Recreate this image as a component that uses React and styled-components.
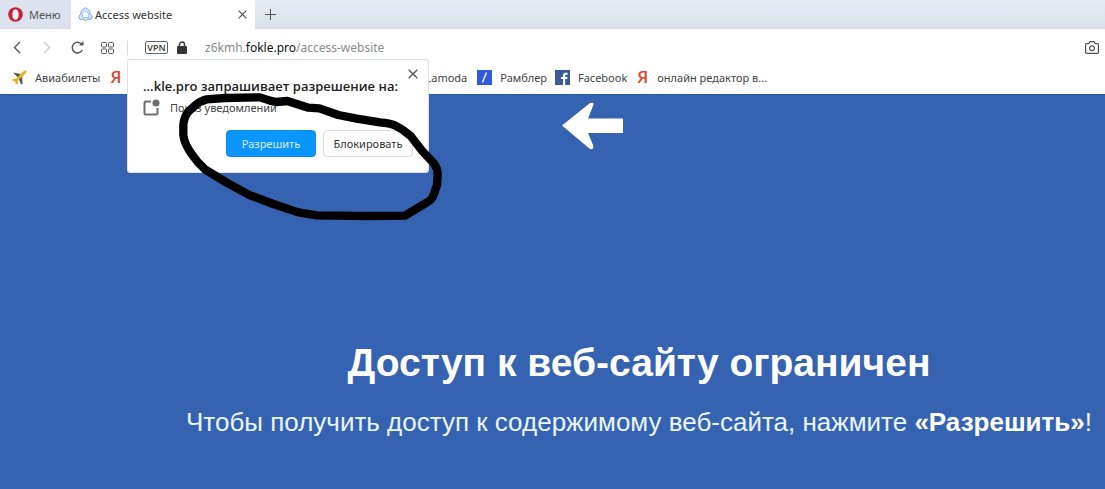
import {useState} from 'react';
import styled, {createGlobalStyle} from 'styled-components';

const GlobalStyle = createGlobalStyle`
  * {
    box-sizing: border-box;
  }

  body {
    margin: 0;
    background-color: #3562b1;
    font-family: 'Noto Sans', 'Open Sans', sans-serif;
    font-size: 11px;
    color: #444;
  }

  button,
  input {
    font: inherit;
    color: inherit;
  }
`;

const Browser = styled.div`
  display: flex;
  flex-direction: column;
  min-height: 100vh;
  overflow-x: hidden;
`;

const TabBar = styled.div`
  display: flex;
  height: 29px;
  background: linear-gradient(#e4ebf3, #dbe1ea);
  border-bottom: 1px solid #d6d9e0;
`;

const IconButton = styled.button`
  display: flex;
  align-items: center;
  justify-content: center;
  width: ${({$width}) => $width || 30}px;
  padding: 0;
  border: 0;
  background: none;
  color: ${({$color}) => $color || '#555'};
`;

const MenuButton = styled.button`
  display: flex;
  align-items: center;
  gap: 6px;
  width: 71px;
  padding: 0 0 0 8px;
  border: 0;
  background-color: #dce3ee;
  color: #555;
`;

const Tab = styled.div`
  display: flex;
  align-items: center;
  gap: 2px;
  width: 184px;
  height: 29px;
  padding-left: 7px;
  background-color: #fff;
  color: #333;
`;

const TabTitle = styled.span`
  flex: 1;
`;

const Toolbar = styled.div`
  display: flex;
  align-items: center;
  height: 37px;
  padding: 0 6px 0 2px;
  background-color: #fff;
`;

const Address = styled.div`
  display: flex;
  align-items: center;
  flex: 1;
  position: relative;
  height: 24px;
  margin-left: 5px;
`;

const Divider = styled.span`
  width: 1px;
  height: 14px;
  margin-right: 17px;
  background-color: #ddd;
`;

const Vpn = styled.span`
  width: 23px;
  border: 1px solid #666;
  border-radius: 2px;
  font-size: 9px;
  font-weight: 600;
  line-height: 11px;
  text-align: center;
  color: #444;
`;

const Lock = styled.svg`
  margin: 0 18px 0 9px;
`;

const Url = styled.a`
  font-size: 12px;
  text-decoration: none;
  color: #8a8a8a;
`;

const Domain = styled.span`
  color: #111;
`;

const Bookmarks = styled.nav`
  display: flex;
  align-items: center;
  height: 28px;
  padding: 0 12px 6px;
  background-color: #fff;
  white-space: nowrap;
`;

const Bookmark = styled.a`
  display: flex;
  align-items: center;
  gap: 8px;
  margin-right: ${({$space}) => $space || 10}px;
  text-decoration: none;
  color: #444;
`;

const Yandex = styled.span`
  width: 12px;
  font-family: 'Open Sans', sans-serif;
  font-size: 17px;
  font-weight: 600;
  line-height: 20px;
  color: #d9442f;
`;

const Popup = styled.section`
  position: absolute;
  top: 23px;
  left: 0;
  z-index: 1;
  width: 302px;
  height: 114px;
  padding: 16px 15px;
  border: 1px solid #dde1e8;
  border-radius: 3px;
  background-color: #fff;
`;

const PopupTitle = styled.h2`
  margin: 0;
  font-family: 'Open Sans', sans-serif;
  font-size: 13px;
  font-weight: 600;
  line-height: 20px;
  white-space: nowrap;
  color: #222;
`;

const CloseButton = styled(IconButton)`
  position: absolute;
  top: 4px;
  right: 5px;
  width: 20px;
  height: 20px;
`;

const Permission = styled.div`
  display: flex;
  align-items: center;
  gap: 10px;
  height: 24px;
  color: #444;
`;

const Actions = styled.div`
  display: flex;
  justify-content: flex-end;
  gap: 7px;
  margin-top: 10px;
`;

const Action = styled.button`
  width: 90px;
  height: 27px;
  padding: 0;
  border: 1px solid ${({$primary}) => ($primary ? '#0a8cf0' : '#ddd')};
  border-radius: 4px;
  background-color: ${({$primary}) => ($primary ? '#0a95ff' : '#fff')};
  color: ${({$primary}) => ($primary ? '#d6f0ff' : '#333')};
`;

const Marker = styled.svg`
  position: absolute;
  top: 30px;
  left: 42px;
  pointer-events: none;
`;

const Main = styled.main`
  flex: 1;
  padding-top: 7px;
  border-top: 1px solid #2b579f;
  background-color: #3562b1;
  font-family: 'Liberation Sans', Arial, sans-serif;
  color: #fff;
`;

const Arrow = styled.svg`
  display: block;
  margin-left: 50%;
`;

const Message = styled.div`
  margin-top: 189px;
  padding-left: 173px;
  text-align: center;
`;

const Heading = styled.h1`
  margin: 0;
  font-size: 39px;
  line-height: 48px;
`;

const Text = styled.p`
  margin: 17px 0 0;
  font-size: 26px;
  line-height: 36px;
  color: #e9f6ff;
`;

const Strong = styled.strong`
  color: #fff;
`;

const Cross = ({size}) => (
    <svg width={size} height={size} viewBox="0 0 10 10" fill="none" stroke="currentColor" strokeWidth="1.4">
        <path d="M0.7 0.7 9.3 9.3M9.3 0.7 0.7 9.3"/>
    </svg>
);

const PermissionPopup = ({onClose}) => (
    <Popup role="dialog" aria-labelledby="permission-title">
        <PopupTitle id="permission-title">...kle.pro запрашивает разрешение на:</PopupTitle>
        <CloseButton aria-label="Закрыть" onClick={onClose}><Cross size={10}/></CloseButton>
        <Permission>
            <svg width="17" height="17" viewBox="0 0 17 17" fill="none" stroke="#6e6e6e" strokeWidth="2">
                <path d="M8 2.5H3Q1.5 2.5 1.5 4V14Q1.5 15.5 3 15.5H13Q14.5 15.5 14.5 14V9"/>
                <circle cx="13" cy="4" r="3.5" fill="#6e6e6e" stroke="none"/>
            </svg>
            Показ уведомлений
        </Permission>
        <Actions>
            <Action $primary onClick={onClose}>Разрешить</Action>
            <Action onClick={onClose}>Блокировать</Action>
        </Actions>
        <Marker width="280" height="140" viewBox="0 0 840 420" fill="none" stroke="#000" strokeWidth="25" strokeLinejoin="round">
            <path d="M75 47Q90 33 110 28L165 24 270 22 300 32 318 36 352 33 415 53 448 55 505 75 560 86 630 97Q660 99 674 106 698 117 722 138L755 181 792 220Q804 237 803 255L801 285 788 322Q783 331 770 338L705 377Q600 379 500 377L440 376 385 367 310 342 240 316 170 278 105 238Q82 218 65 192 42 160 40 135V105Q42 80 55 65Z"/>
        </Marker>
    </Popup>
);

const App = () => {
    const [asking, setAsking] = useState(true);

    return (
        <Browser>
            <GlobalStyle/>
            <TabBar>
                <MenuButton>
                    <svg width="15" height="15" viewBox="0 0 15 15">
                        <ellipse cx="7.5" cy="7.5" rx="7.3" ry="7.3" fill="#c5253c"/>
                        <ellipse cx="7.5" cy="7.5" rx="3.2" ry="5.3" fill="#eef1f7"/>
                    </svg>
                    Меню
                </MenuButton>
                <Tab>
                    <svg width="15" height="15" viewBox="0 0 15 15" stroke="#7fa5d0" fill="#d3e5f8">
                        <path d="M3 7C2.500 3.500 4.500 2.500 7.500 .8 10.500 2.500 12.500 3.500 12 7L14.300 9.500 13 12.500 10 12 7.500 13.500 5 12 2 12.500 .7 9.500Z"/>
                        <path d="M4.500 6.500Q7.500 2.500 10.500 6.500V10.500H4.500Z" fill="#fff" stroke="#a9c5e6"/>
                    </svg>
                    <TabTitle>Access website</TabTitle>
                    <IconButton $width={26} aria-label="Закрыть вкладку"><Cross size={9}/></IconButton>
                </Tab>
                <IconButton aria-label="Новая вкладка">
                    <svg width="11" height="11" viewBox="0 0 11 11" stroke="currentColor">
                        <path d="M5.5 0V11M0 5.5H11"/>
                    </svg>
                </IconButton>
            </TabBar>
            <Toolbar>
                <IconButton aria-label="Назад">
                    <svg width="8" height="13" viewBox="0 0 8 13" fill="none" stroke="currentColor" strokeWidth="1.4">
                        <path d="M7 1 1.5 6.5 7 12"/>
                    </svg>
                </IconButton>
                <IconButton $color="#ccc" aria-label="Вперёд">
                    <svg width="8" height="13" viewBox="0 0 8 13" fill="none" stroke="currentColor" strokeWidth="1.4">
                        <path d="M1 1 6.5 6.5 1 12"/>
                    </svg>
                </IconButton>
                <IconButton aria-label="Обновить">
                    <svg width="13" height="13" viewBox="0 0 13 13" fill="none" stroke="currentColor" strokeWidth="1.4">
                        <path d="M11.3 9A5.3 5.3 0 1 1 11 3.7"/>
                        <path d="M8 4.5H12.5V0Z" fill="currentColor" stroke="none"/>
                    </svg>
                </IconButton>
                <IconButton aria-label="Экспресс-панель">
                    <svg width="13" height="12" viewBox="0 0 13 12" fill="none" stroke="currentColor">
                        <rect x=".5" y=".5" width="5" height="4.5" rx="1"/>
                        <rect x="7.5" y=".5" width="5" height="4.5" rx="1"/>
                        <rect x=".5" y="7" width="5" height="4.5" rx="1"/>
                        <rect x="7.5" y="7" width="5" height="4.5" rx="1"/>
                    </svg>
                </IconButton>
                <Address>
                    <Divider/>
                    <Vpn>VPN</Vpn>
                    <Lock width="10" height="13" viewBox="0 0 10 13">
                        <path d="M2.5 6V3.5a2.5 2.5 0 0 1 5 0V6" fill="none" stroke="#333" strokeWidth="1.4"/>
                        <rect y="5" width="10" height="8" rx="1" fill="#333"/>
                    </Lock>
                    <Url href="#">z6kmh.<Domain>fokle.pro</Domain>/access-website</Url>
                    {asking && <PermissionPopup onClose={() => setAsking(false)}/>}
                </Address>
                <IconButton $width={15} aria-label="Снимок экрана">
                    <svg width="14" height="13" viewBox="0 0 14 13" fill="none" stroke="currentColor" strokeWidth="1.2">
                        <path d="M.6 3.6Q.6 2.6 1.6 2.6H3.6L5 .6H9L10.4 2.6H12.4Q13.4 2.6 13.4 3.6V11.4Q13.4 12.4 12.4 12.4H1.6Q.6 12.4 .6 11.4Z"/>
                        <circle cx="7" cy="7.2" r="2.4"/>
                    </svg>
                </IconButton>
            </Toolbar>
            <Bookmarks>
                <Bookmark href="#">
                    <svg width="15" height="15" viewBox="0 0 15 15">
                        <path d="M1 2.5 6.5 3.5 10 5 10.5 14 9 14.5 6.5 8Z" fill="#5a554a"/>
                        <path d="M14.5 .5C12.5 0 11 1.5 9.5 3L4.5 8.5.5 9 0 10.2 3 11.5 4 14.5 5.5 14 6 10.5 12 5C13.5 3.5 15 2 14.5 .5Z" fill="#e2b321"/>
                    </svg>
                    Авиабилеты
                </Bookmark>
                <Bookmark href="#" $space={303} aria-label="Яндекс"><Yandex>Я</Yandex></Bookmark>
                <Bookmark href="#">Lamoda</Bookmark>
                <Bookmark href="#" $space={8}>
                    <svg width="15" height="15" viewBox="0 0 15 15">
                        <rect width="15" height="15" fill="#315bdc"/>
                        <path d="M9.5 2.5 5.5 12.5" stroke="#fff" strokeWidth="1.4"/>
                    </svg>
                    Рамблер
                </Bookmark>
                <Bookmark href="#">
                    <svg width="15" height="15" viewBox="0 0 15 15">
                        <rect width="15" height="15" fill="#3c5a99"/>
                        <path d="M8 15V9H6V7H8V5.5Q8 2.7 10.8 2.7H12.5V4.8H11.3Q10.2 4.8 10.2 5.8V7H12.5L12.2 9H10.2V15Z" fill="#fff"/>
                    </svg>
                    Facebook
                </Bookmark>
                <Bookmark href="#"><Yandex>Я</Yandex>онлайн редактор в...</Bookmark>
            </Bookmarks>
            <Main>
                <Arrow width="71" height="48" viewBox="0 0 71 48">
                    <path d="M9 23.5 37 1Q42 -.5 40 4L35 16.500H70V31H35L40 43Q41.5 48 37 47Z" fill="#fff"/>
                </Arrow>
                <Message>
                    <Heading>Доступ к веб-сайту ограничен</Heading>
                    <Text>Чтобы получить доступ к содержимому веб-сайта, нажмите <Strong>«Разрешить»</Strong>!</Text>
                </Message>
            </Main>
        </Browser>
    );
};

export default App;
